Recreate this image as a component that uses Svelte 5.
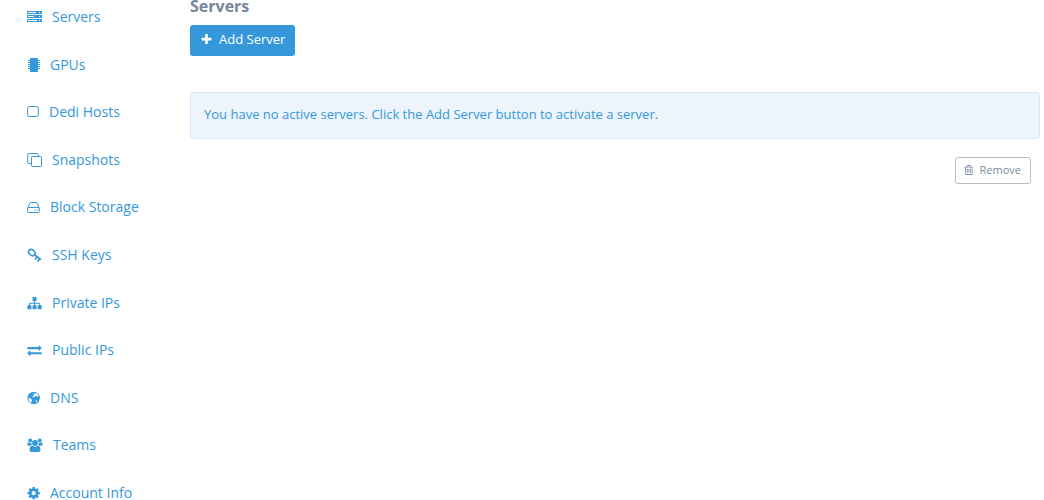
<script>
	const links = [
		{ label: 'Servers', icon: 'servers', width: 15 },
		{ label: 'GPUs', icon: 'chip', width: 13 },
		{ label: 'Dedi Hosts', icon: 'square', width: 12 },
		{ label: 'Snapshots', icon: 'clone', width: 15 },
		{ label: 'Block Storage', icon: 'disk', width: 13 },
		{ label: 'SSH Keys', icon: 'key', width: 15 },
		{ label: 'Private IPs', icon: 'sitemap', width: 15 },
		{ label: 'Public IPs', icon: 'exchange', width: 15 },
		{ label: 'DNS', icon: 'globe', width: 13 },
		{ label: 'Teams', icon: 'users', width: 16 },
		{ label: 'Account Info', icon: 'cog', width: 13 }
	];
</script>

<div class="layout">
	<nav class="sidebar">
		{#each links as link}
			<a class="link" href="#{link.icon}">
				<svg class="icon" width={link.width} height="14" viewBox="0 0 {link.width} 14" aria-hidden="true">
					{#if link.icon === 'servers'}
						<path
							fill-rule="evenodd"
							d="M0 1h15v3H0zM1 2v1h8V2zM12 2v1h1V2zM0 5h15v3H0zM1 6v1h6V6zM12 6v1h1V6zM0 9h15v3H0zM1 10v1h9V10zM12 10v1h1V10z"
						/>
					{:else if link.icon === 'chip'}
						<rect x="3" y="0" width="8" height="14" rx="1" />
						<path d="M1 2h2v1H1zM1 4h2v1H1zM1 6h2v1H1zM1 8h2v1H1zM1 10h2v1H1zM11 2h2v1h-2zM11 4h2v1h-2zM11 6h2v1h-2zM11 8h2v1h-2zM11 10h2v1h-2z" />
					{:else if link.icon === 'square'}
						<rect class="outline" x=".7" y="1.5" width="10.6" height="10" rx="1.7" />
					{:else if link.icon === 'clone'}
						<rect class="outline" x="4.5" y="3.5" width="10" height="10" rx=".8" />
						<path class="outline" d="M4 10.5H1.5a.8.8 0 0 1-.8-.8V1.3a.8.8 0 0 1 .8-.8h9a.8.8 0 0 1 .8.8V3" />
					{:else if link.icon === 'disk'}
						<path class="outline" d="M.7 8.5v3q0 1 1 1h9.600q1 0 1-1v-3q0-1-1-1H1.700q-1 0-1 1L2.500 3.500q.3-1 1.300-1h5.400q1 0 1.300 1l1.700 5" />
						<path d="M7 9.500h1.200v1H7zM9.500 9.500h1.200v1H9.500z" />
					{:else if link.icon === 'key'}
						<g transform="translate(.5 0) rotate(38 4 5)">
							<ellipse class="ring" cx="4" cy="4.500" rx="3.500" ry="2.700" />
							<path d="M7 3.600h8.500v1.800H7zM10 5h1.700v3H10zM13.300 5H15v3h-1.700z" />
						</g>
					{:else if link.icon === 'sitemap'}
						<path
							transform="translate(.4 0) scale(.008)"
							d="M1792 1248v320q0 40-28 68t-68 28h-320q-40 0-68-28t-28-68v-320q0-40 28-68t68-28h96v-192h-512v192h96q40 0 68 28t28 68v320q0 40-28 68t-68 28h-320q-40 0-68-28t-28-68v-320q0-40 28-68t68-28h96v-192h-512v192h96q40 0 68 28t28 68v320q0 40-28 68t-68 28h-320q-40 0-68-28t-28-68v-320q0-40 28-68t68-28h96v-192q0-52 38-90t90-38h512v-192h-96q-40 0-68-28t-28-68v-320q0-40 28-68t68-28h320q40 0 68 28t28 68v320q0 40-28 68t-68 28h-96v192h512q52 0 90 38t38 90v192h96q40 0 68 28t28 68z"
						/>
					{:else if link.icon === 'exchange'}
						<path
							transform="translate(.4 0) scale(.008)"
							d="M1792 1184v192q0 13-9.500 22.500t-22.500 9.500h-1376v192q0 13-9.500 22.500t-22.500 9.500q-12 0-24-10l-319-320q-9-9-9-22 0-14 9-23l320-320q9-9 23-9 13 0 22.500 9.500t9.500 22.500v192h1376q13 0 22.500 9.500t9.500 22.500zm0-544q0 14-9 23l-320 320q-9 9-23 9-13 0-22.500-9.500t-9.500-22.500v-192h-1376q-13 0-22.500-9.500t-9.500-22.500v-192q0-13 9.500-22.500t22.500-9.500h1376v-192q0-14 9-23t23-9q12 0 24 10l319 319q9 9 9 23z"
						/>
					{:else if link.icon === 'globe'}
						<circle cx="6.700" cy="7" r="6.200" />
						<path class="land" d="M6.500 2l1.600.4 1.700-.1 1.600 1.400.3 1.500-1.300.2-1.300-.6-1 .9-1.200-.2-.8 1.100-1-.5 1-1.300 1.200-.8zM1.600 6.600l1.500.7 1.700 1.200.3 1.200-1 1.700-.8.3-1.200-1.700zM8.800 9.600l1.500-.5-.4 1.400-1.200.9z" />
					{:else if link.icon === 'users'}
						<circle cx="8" cy="5" r="2.900" />
						<circle cx="3.200" cy="2.500" r="1.900" />
						<circle cx="12.800" cy="2.500" r="1.900" />
						<path d="M4.300 7.400q1 .9 1.500.6 2.200 1.300 4.400 0 .5.3 1.500-.6 1.800 1.200 1.800 4.300 0 2.300-2 2.300h-7q-2 0-2-2.300 0-3.100 1.800-4.300z" />
						<path d="M1.200 4.300q2 1 3.200.5-.2 1.400.5 2.200-1 0-1.800.8H1.700Q.4 7.800.4 6.600q0-1.800.8-2.300zM14.800 4.300q-2 1-3.200.5.2 1.400-.5 2.200 1 0 1.800.8h1.400q1.300 0 1.300-1.200 0-1.800-.8-2.300z" />
					{:else if link.icon === 'cog'}
						<path
							transform="translate(-.5 0) scale(.008)"
							d="M1152 896q0-106-75-181t-181-75-181 75-75 181 75 181 181 75 181-75 75-181zm512-109v222q0 12-8 23t-20 13l-185 28q-19 54-39 91 35 50 107 138 10 12 10 25t-9 23q-27 37-99 108t-94 71q-12 0-26-9l-138-108q-44 23-91 38-16 136-29 186-7 28-36 28h-222q-14 0-24.500-8.500t-11.500-21.500l-28-184q-49-16-90-37l-141 107q-10 9-25 9-14 0-25-11-126-114-165-168-7-10-7-23 0-12 8-23 15-21 51-66.500t54-70.500q-27-50-41-99l-183-27q-13-2-21-12.500t-8-23.500v-222q0-12 8-23t19-13l186-28q14-46 39-92-40-57-107-138-10-12-10-24 0-10 9-23 26-36 98.500-107.500t94.500-71.500q13 0 26 10l138 107q44-23 91-38 16-136 29-186 7-28 36-28h222q14 0 24.500 8.500t11.500 21.500l28 184q49 16 90 37l142-107q9-9 24-9 13 0 25 10 129 119 165 170 7 8 7 22 0 12-8 23-15 21-51 66.500t-54 70.500q26 50 41 98l183 28q13 2 21 12.500t8 23.500z"
						/>
					{/if}
				</svg>
				{link.label}
			</a>
		{/each}
	</nav>

	<main class="content">
		<h1>Servers</h1>
		<button class="add" type="button">
			<svg class="icon" width="11" height="11" viewBox="128 128 1536 1536" aria-hidden="true">
				<path d="M1600 736v192q0 40-28 68t-68 28h-416v416q0 40-28 68t-68 28h-192q-40 0-68-28t-28-68v-416h-416q-40 0-68-28t-28-68v-192q0-40 28-68t68-28h416v-416q0-40 28-68t68-28h192q40 0 68 28t28 68v416h416q40 0 68 28t28 68z" />
			</svg>
			Add Server
		</button>
		<p class="alert">You have no active servers. Click the Add Server button to activate a server.</p>
		<button class="remove" type="button">
			<svg class="icon" width="9" height="10" viewBox="128 128 1408 1536" aria-hidden="true">
				<path d="M704 736v576q0 14-9 23t-23 9h-64q-14 0-23-9t-9-23v-576q0-14 9-23t23-9h64q14 0 23 9t9 23zm256 0v576q0 14-9 23t-23 9h-64q-14 0-23-9t-9-23v-576q0-14 9-23t23-9h64q14 0 23 9t9 23zm256 0v576q0 14-9 23t-23 9h-64q-14 0-23-9t-9-23v-576q0-14 9-23t23-9h64q14 0 23 9t9 23zm128 724v-948h-896v948q0 22 7 40.500t14.500 27 10.500 8.500h832q3 0 10.500-8.500t14.500-27 7-40.500zm-672-1076h448l-48-117q-7-9-17-11h-317q-10 2-17 11zm928 32v64q0 14-9 23t-23 9h-96v948q0 83-47 143.500t-113 60.500h-832q-66 0-113-58.500t-47-141.500v-952h-96q-14 0-23-9t-9-23v-64q0-14 9-23t23-9h309l70-167q15-37 54-63t79-26h320q40 0 79 26t54 63l70 167h309q14 0 23 9t9 23z" />
			</svg>
			Remove
		</button>
	</main>
</div>

<style>
	:global(body) {
		background: #fff;
		font-family: 'Open Sans', sans-serif;
	}
	.layout {
		display: flex;
		min-height: 100vh;
	}
	.sidebar {
		display: flex;
		flex-direction: column;
		justify-content: space-between;
		flex: none;
		box-sizing: border-box;
		width: 190px;
		padding: 10px 0 0 27px;
	}
	.link {
		display: flex;
		align-items: center;
		gap: 10px;
		color: #3498db;
		font-size: 14px;
		line-height: 14px;
		text-decoration: none;
	}
	.icon {
		flex: none;
		fill: currentColor;
	}
	.outline {
		fill: none;
		stroke: currentColor;
	}
	.ring {
		fill: none;
		stroke: currentColor;
		stroke-width: 1.6;
	}
	.land {
		fill: #fff;
	}
	.content {
		display: flex;
		flex-direction: column;
		align-items: flex-start;
		flex: 1;
		padding-right: 4px;
	}
	h1 {
		margin: 0;
		padding-bottom: 12px;
		color: #76859b;
		font-size: 16px;
		line-height: 13px;
	}
	button {
		display: flex;
		align-items: center;
		border-radius: 3px;
		font-family: inherit;
		cursor: pointer;
	}
	.add {
		gap: 7px;
		padding: 0 10px 2px 11px;
		border: 0;
		background: #3498db;
		color: #fff;
		font-size: 13px;
		line-height: 29px;
	}
	.alert {
		align-self: stretch;
		margin: 36px 0 18px;
		padding: 12px 13px 14px;
		border: 1px solid #d6e9f6;
		border-radius: 3px;
		background: #edf4fb;
		color: #3498db;
		font-size: 13px;
		line-height: 19px;
	}
	.remove {
		align-self: flex-end;
		gap: 7px;
		margin-right: 9px;
		padding: 0 9px 2px 8px;
		border: 1px solid #bbb;
		background: #fff;
		color: #7a8ba3;
		font-size: 11px;
		line-height: 23px;
	}
</style>
